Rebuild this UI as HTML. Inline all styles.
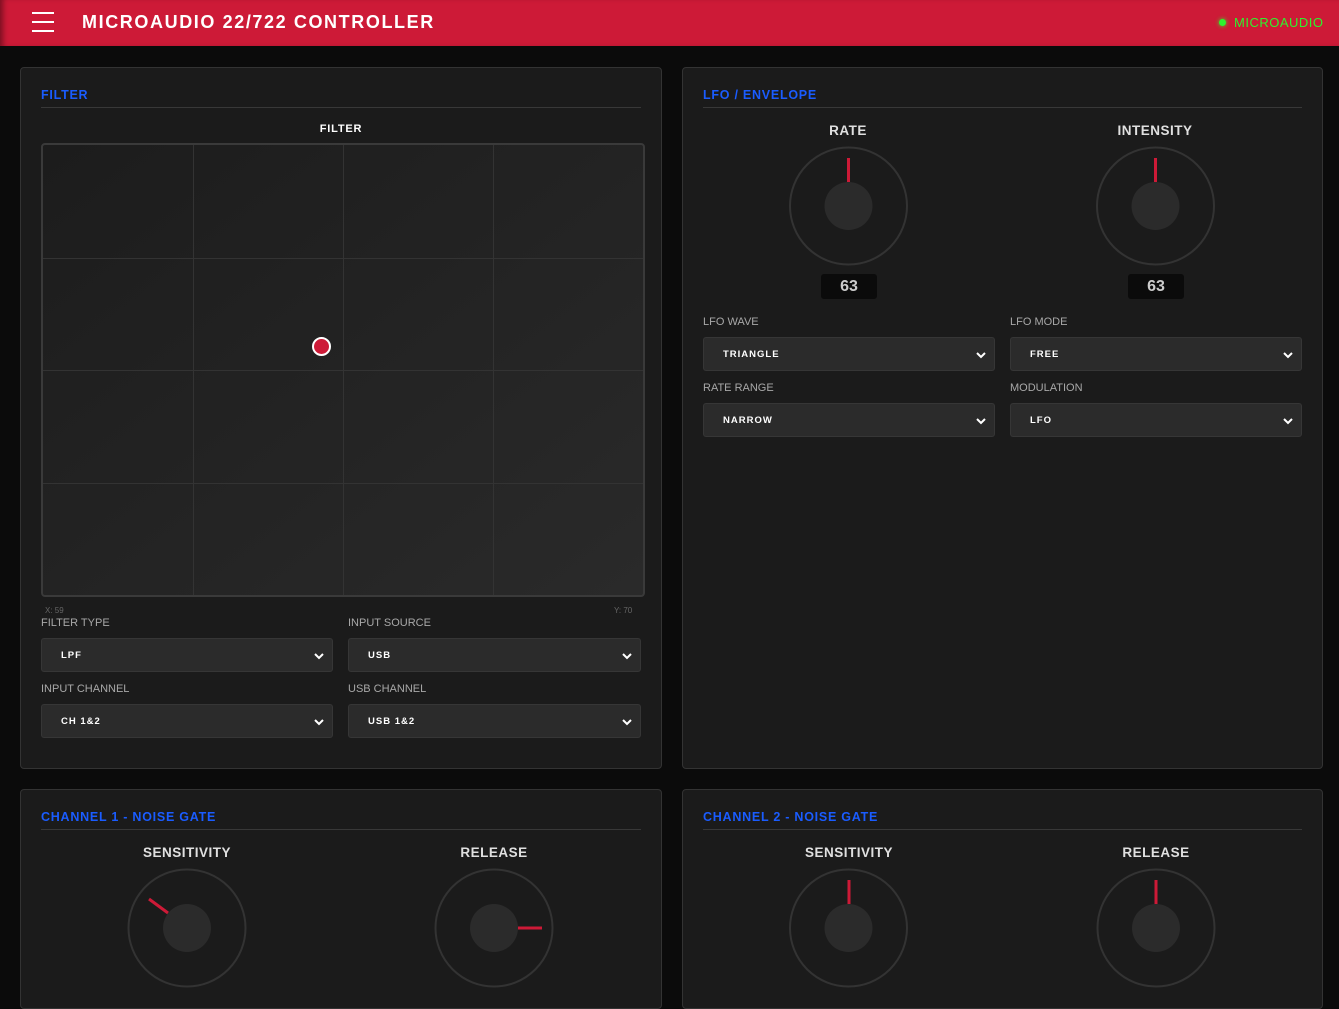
<!DOCTYPE html>
<html><head><meta charset="utf-8"><style>
*{box-sizing:border-box;margin:0;padding:0}
body{width:1339px;height:990px;overflow:hidden;background:#0b0b0b;font-family:"Liberation Sans",sans-serif;position:relative}
.hdr{position:absolute;left:0;top:0;width:1339px;height:46px;background:#cd1a37;box-shadow:inset 6px 0 6px -3px rgba(0,0,0,.4)}
.ham{position:absolute;left:32px;width:22px;height:2px;background:#fff}
.title{position:absolute;left:82px;top:12px;color:#fff;font-weight:bold;font-size:18px;letter-spacing:1.6px}
.st{position:absolute;left:1234px;top:15px;color:#2ef22e;font-size:13px;letter-spacing:.5px}
.dot{position:absolute;left:1219px;top:19px;width:7px;height:7px;border-radius:50%;background:#2ef22e;box-shadow:0 0 4px #2ef22e}
.panel{position:absolute;background:#1b1b1b;border:1px solid #333;border-radius:4px}
.sh{position:absolute;color:#1a5cff;font-weight:bold;font-size:12.5px;letter-spacing:.75px}
.line{position:absolute;height:1px;background:#383838}
.lbl{position:absolute;color:#a8a8a8;font-size:11px}
.sel{position:absolute;height:34px;background:#2b2b2b;border:1px solid #363636;border-radius:3px;color:#fff;font-size:9.5px;font-weight:bold;letter-spacing:1px;padding:11px 0 0 19px}
.sel svg{position:absolute;right:8px;top:13px}
.kl{position:absolute;color:#e0e0e0;font-weight:bold;font-size:13.5px;letter-spacing:.5px;text-align:center;width:200px}
.val{position:absolute;width:56px;height:25px;background:#0b0b0b;border-radius:3px;color:#ccc;font-weight:bold;font-size:16px;text-align:center;padding-top:4px}
</style></head><body>
<div class="hdr">
<div class="ham" style="top:12px"></div><div class="ham" style="top:21px"></div><div class="ham" style="top:30px"></div>
<div class="title">MICROAUDIO 22/722 CONTROLLER</div>
<div class="dot"></div><div class="st">MICROAUDIO</div>
</div>

<div class="panel" style="left:20px;top:67px;width:642px;height:702px"></div>
<div class="panel" style="left:682px;top:67px;width:641px;height:702px"></div>
<div class="panel" style="left:20px;top:789px;width:642px;height:220px"></div>
<div class="panel" style="left:682px;top:789px;width:641px;height:220px"></div>

<div class="sh" style="left:41px;top:88px">FILTER</div><div class="line" style="left:41px;top:107px;width:600px"></div>
<div class="sh" style="left:703px;top:88px">LFO / ENVELOPE</div><div class="line" style="left:703px;top:107px;width:599px"></div>
<div class="sh" style="left:41px;top:810px">CHANNEL 1 - NOISE GATE</div><div class="line" style="left:41px;top:829px;width:600px"></div>
<div class="sh" style="left:703px;top:810px">CHANNEL 2 - NOISE GATE</div><div class="line" style="left:703px;top:829px;width:599px"></div>

<div style="position:absolute;left:241px;top:123px;width:200px;text-align:center;color:#fff;font-weight:bold;font-size:11px;letter-spacing:.8px">FILTER</div>
<svg style="position:absolute;left:41px;top:143px" width="604" height="454">
<defs><linearGradient id="g" x1="0" y1="0" x2="1" y2="1"><stop offset="0" stop-color="#1c1c1c"/><stop offset="1" stop-color="#2a2a2a"/></linearGradient></defs>
<rect x="1" y="1" width="602" height="452" rx="3" fill="url(#g)" stroke="#3a3a3a" stroke-width="2"/>
<g stroke="#333" stroke-width="1"><line x1="152.5" y1="2" x2="152.5" y2="452"/><line x1="302.5" y1="2" x2="302.5" y2="452"/><line x1="452.5" y1="2" x2="452.5" y2="452"/>
<line x1="2" y1="115.5" x2="602" y2="115.5"/><line x1="2" y1="227.5" x2="602" y2="227.5"/><line x1="2" y1="340.5" x2="602" y2="340.5"/></g>
<circle cx="280.5" cy="203.5" r="8.5" fill="#cd1a37" stroke="#fff" stroke-width="2"/>
</svg>
<div style="position:absolute;left:45px;top:606px;color:#666;font-size:8px">X: 59</div>
<div style="position:absolute;left:614px;top:606px;color:#666;font-size:8px">Y: 70</div>

<div class="lbl" style="left:41px;top:617px">FILTER TYPE</div><div class="lbl" style="left:348px;top:617px">INPUT SOURCE</div>
<div class="lbl" style="left:41px;top:683px">INPUT CHANNEL</div><div class="lbl" style="left:348px;top:683px">USB CHANNEL</div>
<div class="lbl" style="left:703px;top:316px">LFO WAVE</div><div class="lbl" style="left:1010px;top:316px">LFO MODE</div>
<div class="lbl" style="left:703px;top:382px">RATE RANGE</div><div class="lbl" style="left:1010px;top:382px">MODULATION</div>

<div class="sel" style="left:41px;top:638px;width:292px">LPF<svg width="10" height="8"><path d="M1 2L5 6L9 2" stroke="#fff" stroke-width="2" fill="none"/></svg></div>
<div class="sel" style="left:348px;top:638px;width:293px">USB<svg width="10" height="8"><path d="M1 2L5 6L9 2" stroke="#fff" stroke-width="2" fill="none"/></svg></div>
<div class="sel" style="left:41px;top:704px;width:292px">CH 1&amp;2<svg width="10" height="8"><path d="M1 2L5 6L9 2" stroke="#fff" stroke-width="2" fill="none"/></svg></div>
<div class="sel" style="left:348px;top:704px;width:293px">USB 1&amp;2<svg width="10" height="8"><path d="M1 2L5 6L9 2" stroke="#fff" stroke-width="2" fill="none"/></svg></div>
<div class="sel" style="left:703px;top:337px;width:292px">TRIANGLE<svg width="10" height="8"><path d="M1 2L5 6L9 2" stroke="#fff" stroke-width="2" fill="none"/></svg></div>
<div class="sel" style="left:1010px;top:337px;width:292px">FREE<svg width="10" height="8"><path d="M1 2L5 6L9 2" stroke="#fff" stroke-width="2" fill="none"/></svg></div>
<div class="sel" style="left:703px;top:403px;width:292px">NARROW<svg width="10" height="8"><path d="M1 2L5 6L9 2" stroke="#fff" stroke-width="2" fill="none"/></svg></div>
<div class="sel" style="left:1010px;top:403px;width:292px">LFO<svg width="10" height="8"><path d="M1 2L5 6L9 2" stroke="#fff" stroke-width="2" fill="none"/></svg></div>

<div class="kl" style="left:748px;top:123px">RATE</div>
<div class="kl" style="left:1055px;top:123px">INTENSITY</div>
<div class="kl" style="left:87px;top:845px">SENSITIVITY</div>
<div class="kl" style="left:394px;top:845px">RELEASE</div>
<div class="kl" style="left:749px;top:845px">SENSITIVITY</div>
<div class="kl" style="left:1056px;top:845px">RELEASE</div>

<svg style="position:absolute;left:0;top:0" width="1339" height="990">
<g fill="none" stroke="#333" stroke-width="2">
<circle cx="848.5" cy="206" r="58.5"/><circle cx="1155.5" cy="206" r="58.5"/>
<circle cx="187" cy="928" r="58.5"/><circle cx="494" cy="928" r="58.5"/>
<circle cx="848.5" cy="928" r="58.5"/><circle cx="1156" cy="928" r="58.5"/></g>
<g fill="#2b2b2b"><circle cx="848.5" cy="206" r="24"/><circle cx="1155.5" cy="206" r="24"/>
<circle cx="187" cy="928" r="24"/><circle cx="494" cy="928" r="24"/>
<circle cx="848.5" cy="928" r="24"/><circle cx="1156" cy="928" r="24"/></g>
<g stroke="#cd1a37" stroke-width="3">
<line x1="848.5" y1="158" x2="848.5" y2="182"/><line x1="1155.5" y1="158" x2="1155.5" y2="182"/>
<line x1="149" y1="899" x2="168" y2="913"/><line x1="518" y1="928" x2="542" y2="928"/>
<line x1="849" y1="880" x2="849" y2="904"/><line x1="1156" y1="880" x2="1156" y2="904"/></g>
</svg>
<div class="val" style="left:821px;top:274px">63</div>
<div class="val" style="left:1128px;top:274px">63</div>
</body></html>
